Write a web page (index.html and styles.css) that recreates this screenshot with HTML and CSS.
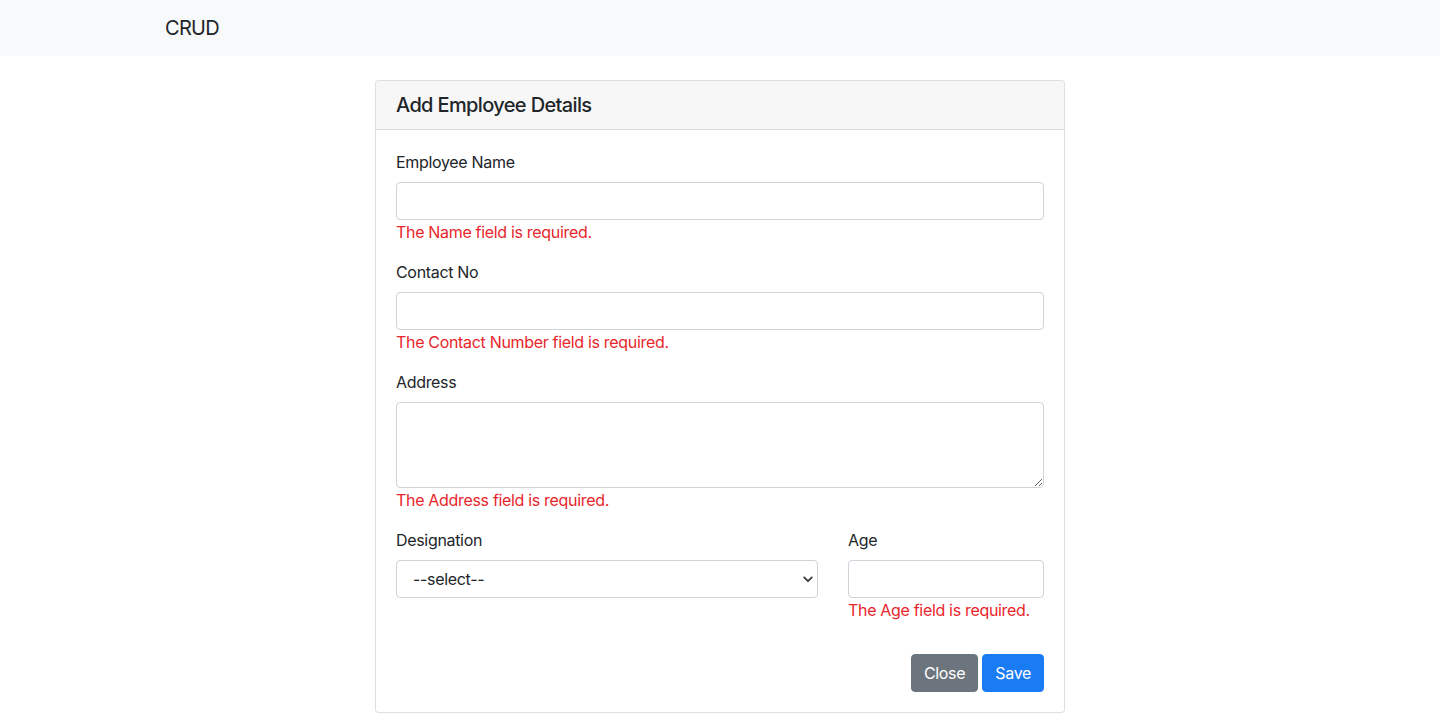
FILE: index.html
```html
<!DOCTYPE html>
<html lang="en">
<head>
<meta charset="utf-8">
<title>CRUD</title>
<link rel="stylesheet" href="styles.css">
</head>
<body>
<nav class="navbar">
  <div class="container">
    <span class="brand">CRUD</span>
  </div>
</nav>
<main class="main">
  <div class="card">
    <div class="card-header">Add Employee Details</div>
    <form class="card-body">
      <div class="form-group">
        <label class="label">Employee Name</label>
        <input class="control" type="text">
        <div class="error">The Name field is required.</div>
      </div>
      <div class="form-group">
        <label class="label">Contact No</label>
        <input class="control" type="text">
        <div class="error">The Contact Number field is required.</div>
      </div>
      <div class="form-group">
        <label class="label">Address</label>
        <textarea class="control textarea" rows="3"></textarea>
        <div class="error">The Address field is required.</div>
      </div>
      <div class="form-row">
        <div class="col-8">
          <label class="label">Designation</label>
          <div class="select-wrap">
            <select class="control select"><option>--select--</option></select>
            <svg class="chev" width="10" height="7" viewBox="0 0 10 7"><path d="M1.2 1.4 5 5.2 8.8 1.4" fill="none" stroke="#343a40" stroke-width="1.8" stroke-linecap="round" stroke-linejoin="round"/></svg>
          </div>
        </div>
        <div class="col-4">
          <label class="label">Age</label>
          <input class="control" type="text">
          <div class="error">The Age field is required.</div>
        </div>
      </div>
      <div class="actions">
        <button type="button" class="btn btn-secondary">Close</button>
        <button type="button" class="btn btn-primary">Save</button>
      </div>
    </form>
  </div>
</main>
</body>
</html>
```

FILE: styles.css
```css
* { box-sizing: border-box; }
html, body { margin: 0; padding: 0; }
body {
  font-family: Inter, "Noto Sans", "Liberation Sans", sans-serif;
  font-size: 16px;
  line-height: 1.5;
  color: #212529;
  background: #fff;
  letter-spacing: -0.02em;
}
.navbar {
  background: #f8f9fa;
  height: 56px;
  display: flex;
  align-items: center;
}
.container {
  width: 1140px;
  margin: 0 auto;
  padding: 0 15px;
}
.brand {
  font-size: 20px;
  line-height: 30px;
  color: #212529;
  letter-spacing: -0.035em;
}
.main {
  padding-top: 24px;
}
.card {
  width: 690px;
  margin: 0 auto;
  border: 1px solid rgba(0,0,0,0.125);
  border-radius: 4px;
  background: #fff;
}
.card-header {
  background: #f7f7f7;
  border-bottom: 1px solid rgba(0,0,0,0.125);
  padding: 12px 20px;
  font-size: 20px;
  line-height: 24px;
  font-weight: 500;
  letter-spacing: -0.032em;
  border-radius: 3px 3px 0 0;
}
.card-body {
  padding: 20px;
  margin: 0;
}
.form-group { margin-bottom: 16px; }
.label {
  display: block;
  margin-bottom: 8px;
  line-height: 24px;
}
.control {
  display: block;
  width: 100%;
  height: 38px;
  padding: 6px 12px;
  font: inherit;
  letter-spacing: inherit;
  color: #495057;
  background: #fff;
  border: 1px solid #ced4da;
  border-radius: 4px;
  margin: 0;
}
.textarea {
  height: 86px;
  resize: vertical;
}
.error {
  color: #e8262b;
  line-height: 24px;
}
.form-row {
  display: flex;
  gap: 30px;
  margin-bottom: 32px;
}
.col-8 { width: 422px; }
.col-4 { width: 196px; }
.select-wrap { position: relative; }
.select {
  appearance: none;
  -webkit-appearance: none;
  padding-left: 16px;
  color: #212529;
}
.chev {
  position: absolute;
  right: 5px;
  top: 16px;
  pointer-events: none;
}
.actions {
  display: flex;
  justify-content: flex-end;
  gap: 4px;
}
.btn {
  height: 38px;
  padding: 6px 12px;
  font: inherit;
  letter-spacing: inherit;
  line-height: 24px;
  border: 1px solid transparent;
  border-radius: 4px;
  color: #fff;
}
.btn-secondary { background: #6c757d; border-color: #6c757d; }
.btn-primary { background: #1a7cf5; border-color: #1a7cf5; }
```
